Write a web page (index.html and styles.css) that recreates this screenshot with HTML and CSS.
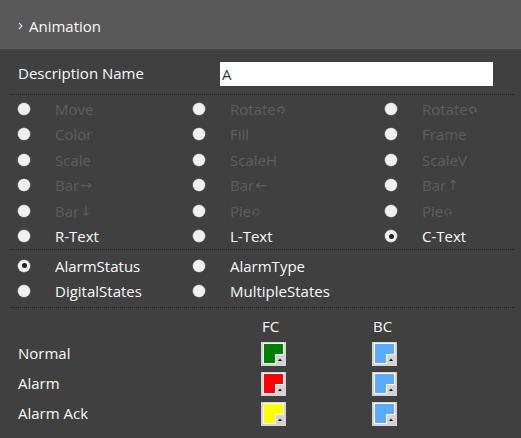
FILE: index.html
```html
<!DOCTYPE html>
<html lang="en">
<head>
    <meta charset="UTF-8">
    <meta name="viewport" content="width=device-width, initial-scale=1.0">
    <title>Animation</title>
    <link rel="stylesheet" href="styles.css">
</head>
<body>
    <div class="header">
        <svg class="chevron" width="5" height="8" viewBox="0 0 5 8"><polyline points="1,1 4,4 1,7" fill="none" stroke="#e6e6e6" stroke-width="1.1"/></svg>
        <span>Animation</span>
    </div>
    <div class="panel">
        <div class="desc-row">
            <label class="desc-label">Description Name</label>
            <input type="text" class="desc-input" value="A">
        </div>

        <div class="radio-grid first">
            <div class="opt off"><span class="radio"></span>Move</div>
            <div class="opt off"><span class="radio"></span>Rotate<svg class="rot" width="8" height="8" viewBox="0 0 8 8"><path d="M1.6 5.6 A3 3 0 1 1 4 7" fill="none" stroke="#5f5f5f" stroke-width="1.3"/><polygon points="0,4.2 3.2,4.6 1.3,7.2" fill="#5f5f5f"/></svg></div>
            <div class="opt off"><span class="radio"></span>Rotate<svg class="rot" width="8" height="8" viewBox="0 0 8 8"><path d="M6.4 5.6 A3 3 0 1 0 4 7" fill="none" stroke="#5f5f5f" stroke-width="1.3"/><polygon points="8,4.2 4.8,4.6 6.7,7.2" fill="#5f5f5f"/></svg></div>

            <div class="opt off"><span class="radio"></span>Color</div>
            <div class="opt off"><span class="radio"></span>Fill</div>
            <div class="opt off"><span class="radio"></span>Frame</div>

            <div class="opt off"><span class="radio"></span>Scale</div>
            <div class="opt off"><span class="radio"></span>ScaleH</div>
            <div class="opt off"><span class="radio"></span>ScaleV</div>

            <div class="opt off"><span class="radio"></span>Bar<span class="arrow">→</span></div>
            <div class="opt off"><span class="radio"></span>Bar<span class="arrow">←</span></div>
            <div class="opt off"><span class="radio"></span>Bar <span class="arrow">↑</span></div>

            <div class="opt off"><span class="radio"></span>Bar <span class="arrow">↓</span></div>
            <div class="opt off"><span class="radio"></span>Pie<svg class="rot" width="8" height="8" viewBox="0 0 8 8"><path d="M1.6 5.6 A3 3 0 1 1 4 7" fill="none" stroke="#5a5a5a" stroke-width="1.1"/><polygon points="0,4.2 3.2,4.6 1.3,7.2" fill="#5a5a5a"/></svg></div>
            <div class="opt off"><span class="radio"></span>Pie<svg class="rot" width="8" height="8" viewBox="0 0 8 8"><path d="M6.4 5.6 A3 3 0 1 0 4 7" fill="none" stroke="#5a5a5a" stroke-width="1.1"/><polygon points="8,4.2 4.8,4.6 6.7,7.2" fill="#5a5a5a"/></svg></div>

            <div class="opt"><span class="radio"></span>R-Text</div>
            <div class="opt"><span class="radio"></span>L-Text</div>
            <div class="opt"><span class="radio checked"></span>C-Text</div>
        </div>

        <div class="radio-grid second">
            <div class="opt"><span class="radio checked"></span>AlarmStatus</div>
            <div class="opt"><span class="radio"></span>AlarmType</div>
            <div></div>
            <div class="opt"><span class="radio"></span>DigitalStates</div>
            <div class="opt"><span class="radio"></span>MultipleStates</div>
            <div></div>
        </div>

        <div class="color-table">
            <div></div><div class="col-head">FC</div><div class="col-head">BC</div>

            <div class="row-label">Normal</div>
            <div><svg class="swatch" width="25" height="24" viewBox="0 0 25 24"><rect width="25" height="24" fill="#d4d4d4"/><polygon points="2,1 23,1 23,13 15,13 15,22 2,22" fill="#fff"/><polygon points="3,2 22,2 22,12 14,12 14,21 3,21" fill="#008000"/><polygon points="17,19 21,19 19,16.5" fill="#111"/></svg></div>
            <div><svg class="swatch" width="25" height="24" viewBox="0 0 25 24"><rect width="25" height="24" fill="#d4d4d4"/><polygon points="2,1 23,1 23,13 15,13 15,22 2,22" fill="#fff"/><polygon points="3,2 22,2 22,12 14,12 14,21 3,21" fill="#5aabff"/><polygon points="17,19 21,19 19,16.5" fill="#111"/></svg></div>

            <div class="row-label">Alarm</div>
            <div><svg class="swatch" width="25" height="24" viewBox="0 0 25 24"><rect width="25" height="24" fill="#d4d4d4"/><polygon points="2,1 23,1 23,13 15,13 15,22 2,22" fill="#fff"/><polygon points="3,2 22,2 22,12 14,12 14,21 3,21" fill="#ff0000"/><polygon points="17,19 21,19 19,16.5" fill="#111"/></svg></div>
            <div><svg class="swatch" width="25" height="24" viewBox="0 0 25 24"><rect width="25" height="24" fill="#d4d4d4"/><polygon points="2,1 23,1 23,13 15,13 15,22 2,22" fill="#fff"/><polygon points="3,2 22,2 22,12 14,12 14,21 3,21" fill="#5aabff"/><polygon points="17,19 21,19 19,16.5" fill="#111"/></svg></div>

            <div class="row-label">Alarm Ack</div>
            <div><svg class="swatch" width="25" height="24" viewBox="0 0 25 24"><rect width="25" height="24" fill="#d4d4d4"/><polygon points="2,1 23,1 23,13 15,13 15,22 2,22" fill="#fff"/><polygon points="3,2 22,2 22,12 14,12 14,21 3,21" fill="#ffff00"/><polygon points="17,19 21,19 19,16.5" fill="#111"/></svg></div>
            <div><svg class="swatch" width="25" height="24" viewBox="0 0 25 24"><rect width="25" height="24" fill="#d4d4d4"/><polygon points="2,1 23,1 23,13 15,13 15,22 2,22" fill="#fff"/><polygon points="3,2 22,2 22,12 14,12 14,21 3,21" fill="#5aabff"/><polygon points="17,19 21,19 19,16.5" fill="#111"/></svg></div>
        </div>
    </div>
</body>
</html>
```

FILE: styles.css
```css
html, body {
    margin: 0;
    padding: 0;
    background: #404040;
    font-family: "Open Sans", "Noto Sans", sans-serif;
    font-size: 15px;
    color: #fafafa;
    height: 438px;
    overflow: hidden;
}
.header {
    height: 49px;
    background: #595959;
    border-bottom: 1px solid #5e5e5e;
    display: flex;
    align-items: center;
    padding: 3px 0 0 18px;
    box-sizing: border-box;
}
.chevron {
    margin-right: 6px;
    margin-top: 1px;
}
.panel {
    padding: 0 6px 0 11px;
}
.desc-row {
    display: flex;
    align-items: center;
    height: 24px;
    margin-top: 13px;
    padding: 0 0 8px 7px;
    border-bottom: 1px dotted #1c1c1c;
}
.desc-label {
    width: 202px;
    margin-top: -2px;
}
.desc-input {
    width: 273px;
    height: 24px;
    border: none;
    padding: 0 0 0 2px;
    box-sizing: border-box;
    font-family: inherit;
    font-size: 15px;
    color: #3a3a3a;
    background: #fff;
    outline: none;
}
.radio-grid {
    display: grid;
    grid-template-columns: 175px 192px 1fr;
    padding-left: 7px;
    border-bottom: 1px dotted #1c1c1c;
}
.radio-grid.first {
    grid-auto-rows: 25.5px;
    padding-top: 1px;
}
.radio-grid.second {
    grid-auto-rows: 25px;
    padding-top: 3px;
    padding-bottom: 4px;
}
.opt {
    display: flex;
    align-items: center;
    white-space: nowrap;
}
.opt.off {
    color: #5e5e5e;
}
.radio {
    width: 12px;
    height: 12px;
    border-radius: 50%;
    background: #f0f0f0;
    box-shadow: 0 0 0 0.5px #9a9a9a;
    margin-right: 25px;
    flex: none;
    position: relative;
}
.radio.checked::after {
    content: "";
    position: absolute;
    left: 3.5px;
    top: 3.5px;
    width: 5px;
    height: 5px;
    border-radius: 50%;
    background: #1e1e1e;
}
.rot {
    margin-left: 1px;
    margin-top: 2px;
}
.arrow {
    font-family: "DejaVu Sans", sans-serif;
    font-size: 14px;
    margin-left: 1px;
}
.color-table {
    display: grid;
    grid-template-columns: 243px 111px 1fr;
    grid-template-rows: 26px repeat(3, 30px);
    padding: 5px 0 0 7px;
    align-items: center;
}
.col-head {
    padding-left: 1px;
}
.row-label {
    margin-top: -3px;
}
.swatch {
    display: block;
}
```
